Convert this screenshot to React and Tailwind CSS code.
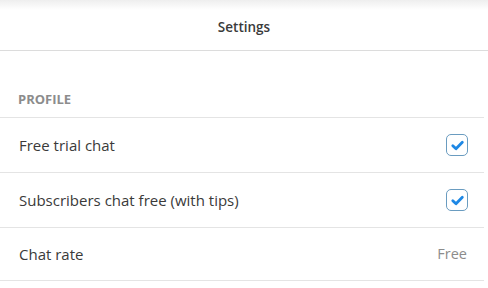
import React from "react";

function Check() {
  return (
    <div className="w-[22px] h-[22px] rounded-[5px] border-[1.5px] border-[#6a9cc0] flex items-center justify-center">
      <svg width="15" height="15" viewBox="0 0 14 14" fill="none">
        <path d="M2.6 7.2 L5.6 10.1 L11.5 3.9" stroke="#1e88e5" strokeWidth="2.6" strokeLinecap="round" strokeLinejoin="round" />
      </svg>
    </div>
  );
}

function Row({ label, right, h }) {
  return (
    <div className={`flex items-center justify-between pl-[19px] pr-[16px] border-b border-[#e4e4e4] ${h}`}>
      <span className="text-[15px] text-[#3a3a3a]">{label}</span>
      {right}
    </div>
  );
}

export default function App() {
  return (
    <div className="w-[488px] h-[288px] bg-white overflow-hidden" style={{ fontFamily: '"Open Sans", "Noto Sans", sans-serif' }}>
      <div className="h-[51px] border-b border-[#dcdcdc] bg-gradient-to-b from-[#eeeeee] via-white via-[20%] to-white flex items-center justify-center pt-[4px]">
        <span className="text-[13.5px] font-semibold text-[#3a3a3a]">Settings</span>
      </div>
      <div className="w-[484px]">
        <div className="h-[67px] flex items-end pl-[18px] pb-[8px] border-b border-[#e4e4e4]">
          <span className="text-[13px] font-bold text-[#8c8c8c]">PROFILE</span>
        </div>
        <Row h="h-[55px]" label="Free trial chat" right={<Check />} />
        <Row h="h-[55px]" label="Subscribers chat free (with tips)" right={<Check />} />
        <Row h="h-[53px]" label="Chat rate" right={<span className="text-[14.5px] text-[#8c8c8c] mr-[1px]">Free</span>} />
      </div>
    </div>
  );
}
